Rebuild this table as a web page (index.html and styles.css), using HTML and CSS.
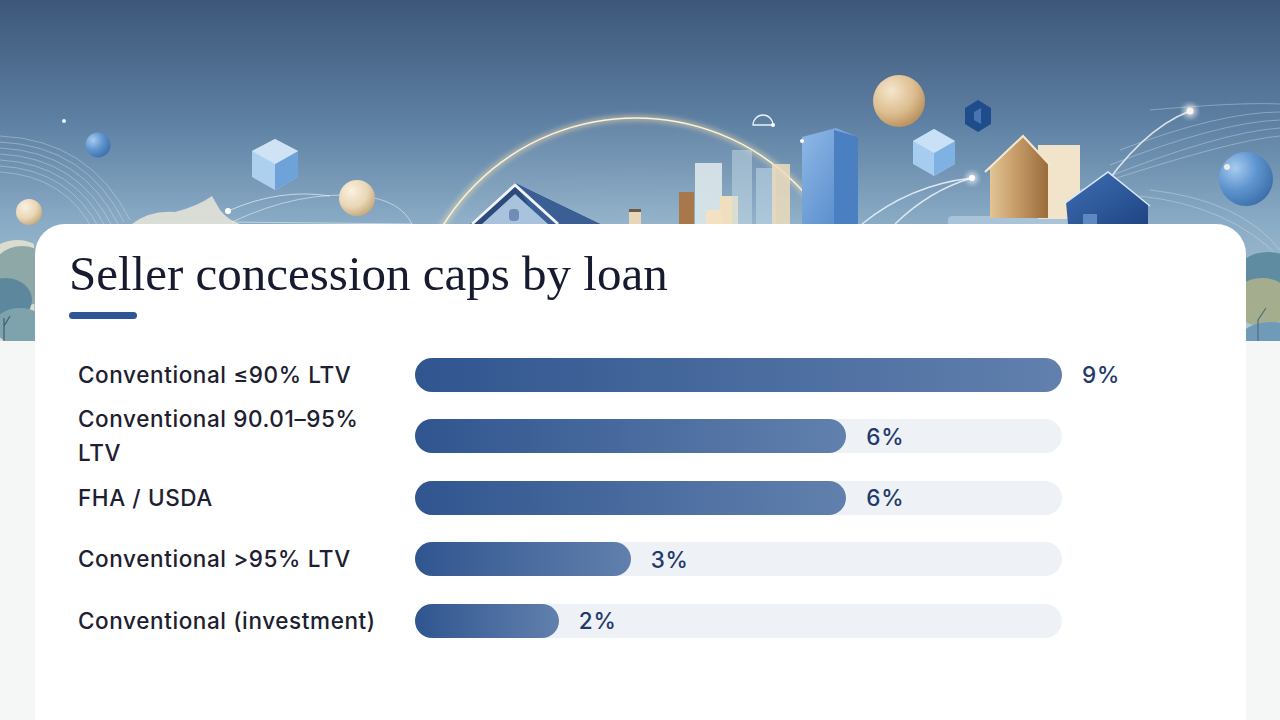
FILE: index.html
```html
<!DOCTYPE html>
<html lang="en">
<head>
<meta charset="utf-8">
<title>Seller concession caps by loan</title>
<link rel="stylesheet" href="styles.css">
</head>
<body>
<div class="page">
  <div class="banner">
    <svg class="banner-art" viewBox="0 0 1280 341" width="1280" height="341" xmlns="http://www.w3.org/2000/svg">
      <defs>
        <linearGradient id="sky" x1="0" y1="0" x2="0" y2="1">
          <stop offset="0" stop-color="#3d5779"/>
          <stop offset="0.35" stop-color="#5d7fa2"/>
          <stop offset="0.65" stop-color="#89abc5"/>
          <stop offset="1" stop-color="#b4cbd6"/>
        </linearGradient>
        <radialGradient id="dome" cx="0.5" cy="1" r="0.9">
          <stop offset="0" stop-color="#ffffff" stop-opacity="0.35"/>
          <stop offset="1" stop-color="#ffffff" stop-opacity="0.05"/>
        </radialGradient>
        <radialGradient id="tan" cx="0.35" cy="0.3" r="0.75">
          <stop offset="0" stop-color="#f6e6cc"/>
          <stop offset="0.6" stop-color="#dcbd8f"/>
          <stop offset="1" stop-color="#b78f5c"/>
        </radialGradient>
        <radialGradient id="cream" cx="0.35" cy="0.3" r="0.75">
          <stop offset="0" stop-color="#fbf1df"/>
          <stop offset="0.6" stop-color="#e8d6b6"/>
          <stop offset="1" stop-color="#c6a87a"/>
        </radialGradient>
        <radialGradient id="blueball" cx="0.3" cy="0.3" r="0.8">
          <stop offset="0" stop-color="#a7cbef"/>
          <stop offset="0.5" stop-color="#5f95cf"/>
          <stop offset="1" stop-color="#3a6ca8"/>
        </radialGradient>
        <linearGradient id="tower" x1="0" y1="0" x2="1" y2="1">
          <stop offset="0" stop-color="#8fb8e6"/>
          <stop offset="1" stop-color="#4f85c8"/>
        </linearGradient>
        <linearGradient id="brown" x1="0" y1="0" x2="1" y2="0">
          <stop offset="0" stop-color="#e6c99a"/>
          <stop offset="0.5" stop-color="#c49a66"/>
          <stop offset="1" stop-color="#9a6c3c"/>
        </linearGradient>
        <linearGradient id="navy" x1="0" y1="0" x2="1" y2="1">
          <stop offset="0" stop-color="#3f6fb5"/>
          <stop offset="1" stop-color="#1f4583"/>
        </linearGradient>
        <filter id="glow" x="-20%" y="-20%" width="140%" height="140%">
          <feGaussianBlur stdDeviation="2.5"/>
        </filter>
      </defs>
      <rect width="1280" height="341" fill="url(#sky)"/>

      <!-- left concentric arcs -->
      <g fill="none" stroke="#dfeaf2" stroke-opacity="0.45" stroke-width="0.8">
        <path d="M0 136 Q90 140 130 220"/>
        <path d="M0 142 Q86 146 124 222"/>
        <path d="M0 148 Q82 152 118 224"/>
        <path d="M0 154 Q78 158 112 226"/>
        <path d="M0 160 Q74 164 106 228"/>
        <path d="M0 166 Q70 170 100 230"/>
        <path d="M0 172 Q66 176 94 232"/>
      </g>
      <!-- right concentric arcs -->
      <g fill="none" stroke="#dfeaf2" stroke-opacity="0.45" stroke-width="0.8">
        <path d="M1150 110 Q1240 102 1280 104"/>
        <path d="M1120 150 Q1220 112 1280 112"/>
        <path d="M1110 165 Q1220 122 1280 120"/>
        <path d="M1100 180 Q1220 132 1280 128"/>
        <path d="M1080 190 Q1230 140 1280 136"/>
        <path d="M1150 190 Q1240 200 1280 250"/>
        <path d="M1140 196 Q1230 206 1280 258"/>
      </g>

      <!-- dome -->
      <circle cx="636" cy="345" r="227" fill="url(#dome)"/>
      <circle cx="636" cy="345" r="227" fill="none" stroke="#ffe4ad" stroke-width="6" stroke-opacity="0.45" filter="url(#glow)"/>
      <circle cx="636" cy="345" r="227" fill="none" stroke="#fff3d6" stroke-width="1.4"/>

      <!-- paper hills left -->
      <path d="M132 224 Q150 210 175 212 Q198 206 212 196 L220 210 Q228 220 240 224 Z" fill="#e8e6d8" opacity="0.85"/>
      <path d="M232 222 Q300 190 362 196 Q400 200 412 224 Z" fill="none" stroke="#e6f0f6" stroke-opacity="0.6"/>

      <!-- left small objects -->
      <circle cx="98" cy="145" r="12.5" fill="url(#blueball)"/>
      <circle cx="29" cy="212" r="13" fill="url(#cream)"/>
      <circle cx="357" cy="198" r="18" fill="url(#cream)"/>
      <circle cx="64" cy="121" r="2" fill="#eaf3fa"/>
      <circle cx="228" cy="211" r="3" fill="#ffffff"/>
      <path d="M228 211 Q280 188 330 196" fill="none" stroke="#e6f0f6" stroke-width="1" stroke-opacity="0.7"/>
      <!-- cube -->
      <polygon points="275,139 298,151 298,177 275,190 252,177 252,151" fill="#aed0ef"/>
      <polygon points="275,164 298,151 298,177 275,190" fill="#6ea3da"/>
      <polygon points="275,139 298,151 275,164 252,151" fill="#cfe3f5"/>

      <!-- house center -->
      <polygon points="470,224 515,183 600,224" fill="#2c4a7c"/>
      <polygon points="515,183 560,205 600,224 540,224" fill="#3b5f95"/>
      <polygon points="482,224 515,194 548,224" fill="#a9c2dd"/>
      <polyline points="472,224 515,185 558,224" fill="none" stroke="#f0f4f8" stroke-width="3"/>
      <rect x="509" y="209" width="10" height="12" rx="4" fill="#6f8db5"/>
      <rect x="629" y="209" width="12" height="15" fill="#e8d6b8"/>
      <rect x="629" y="209" width="12" height="3" fill="#6b5a45"/>

      <!-- city buildings -->
      <rect x="679" y="192" width="15" height="32" fill="#a9784a"/>
      <rect x="695" y="163" width="27" height="61" fill="#dce8ea" opacity="0.9"/>
      <rect x="720" y="196" width="18" height="28" fill="#f0dfbd"/>
      <rect x="706" y="210" width="16" height="14" fill="#f2e2c2"/>
      <rect x="732" y="150" width="20" height="74" fill="#c5dbe6" opacity="0.5"/>
      <rect x="756" y="168" width="20" height="56" fill="#bdd5e4" opacity="0.6"/>
      <rect x="772" y="164" width="18" height="60" fill="#ecdcbc" opacity="0.85"/>
      <polygon points="802,137 836,128 858,137 858,224 802,224" fill="url(#tower)"/>
      <polygon points="834,130 858,137 858,224 834,224" fill="#4a7fc2"/>
      <circle cx="802" cy="141" r="2" fill="#ffffff"/>

      <!-- right floating objects -->
      <path d="M753 125 A10 10 0 0 1 773 125 Z" fill="none" stroke="#e8f1f8" stroke-width="1.3"/>
      <circle cx="773" cy="125" r="2" fill="#ffffff"/>
      <ellipse cx="899" cy="101" rx="26" ry="26" fill="url(#tan)"/>
      <polygon points="978,100 991,108 991,124 978,132 965,124 965,108" fill="#1f4c8a"/>
      <polygon points="974,112 981,108 981,124 974,120" fill="#4a76b0"/>
      <polygon points="934,129 955,141 955,164 934,176 913,164 913,141" fill="#a6cdef"/>
      <polygon points="934,153 955,141 955,164 934,176" fill="#7fb2e2"/>
      <polygon points="934,129 955,141 934,153 913,141" fill="#c8e1f6"/>

      <!-- curves with glowing dots -->
      <g fill="none" stroke="#eef5fb" stroke-width="1.4" stroke-opacity="0.85">
        <path d="M862 224 Q910 185 972 178"/>
        <path d="M895 224 Q930 190 972 178"/>
        <path d="M1095 200 Q1140 130 1190 111"/>
      </g>
      <circle cx="972" cy="178" r="6" fill="#ffffff" opacity="0.6" filter="url(#glow)"/>
      <circle cx="972" cy="178" r="3" fill="#ffffff"/>
      <circle cx="1190" cy="111" r="7" fill="#ffffff" opacity="0.6" filter="url(#glow)"/>
      <circle cx="1190" cy="111" r="3.5" fill="#fff4ea"/>

      <!-- platform -->
      <rect x="948" y="216" width="130" height="10" rx="4" fill="#a9c3d8"/>

      <!-- brown house & beige block -->
      <rect x="1038" y="145" width="42" height="74" fill="#f1e4cb"/>
      <polygon points="987,170 1023,135 1048,162 1048,218 990,218 990,170" fill="url(#brown)"/>
      <polyline points="985,172 1023,136 1050,165" fill="none" stroke="#f6e8cf" stroke-width="2"/>

      <!-- blue house -->
      <polygon points="1066,202 1108,173 1148,204 1148,224 1068,224" fill="url(#navy)"/>
      <polyline points="1064,204 1108,172 1150,206" fill="none" stroke="#dce8f4" stroke-width="1.5"/>
      <rect x="1083" y="214" width="14" height="10" fill="#5d88c2"/>

      <!-- right sphere -->
      <circle cx="1246" cy="179" r="27" fill="url(#blueball)"/>
      <circle cx="1227" cy="167" r="3" fill="#fff6e6" opacity="0.85"/>

      <!-- left trees -->
      <path d="M0 244 Q18 236 34 244 L34 341 L0 341 Z" fill="#d9dccf"/>
      <ellipse cx="22" cy="276" rx="32" ry="30" fill="#8ea8a8"/>
      <ellipse cx="6" cy="300" rx="26" ry="22" fill="#5d879c"/>
      <ellipse cx="20" cy="326" rx="26" ry="18" fill="#7fa3ad"/>
      <path d="M4 341 L4 318 M4 326 L10 316" stroke="#3f5d72" stroke-width="1.2" fill="none"/>

      <!-- right trees -->
      <ellipse cx="1268" cy="272" rx="30" ry="20" fill="#5f8ca0"/>
      <ellipse cx="1262" cy="302" rx="30" ry="24" fill="#a4ad8e"/>
      <ellipse cx="1272" cy="336" rx="30" ry="14" fill="#6f9bb8"/>
      <path d="M1258 341 L1258 320 L1266 308" stroke="#4f6f7c" stroke-width="1.2" fill="none"/>
    </svg>
  </div>

  <main class="card">
    <h1 class="title">Seller concession caps by loan</h1>
    <div class="accent"></div>

    <div class="chart">
      <div class="row">
        <div class="label">Conventional ≤90% LTV</div>
        <div class="track"><div class="fill" style="width: 100%"></div><span class="value">9%</span></div>
      </div>
      <div class="row">
        <div class="label">Conventional 90.01–95% LTV</div>
        <div class="track"><div class="fill" style="width: 66.667%"></div><span class="value">6%</span></div>
      </div>
      <div class="row">
        <div class="label">FHA / USDA</div>
        <div class="track"><div class="fill" style="width: 66.667%"></div><span class="value">6%</span></div>
      </div>
      <div class="row">
        <div class="label">Conventional &gt;95% LTV</div>
        <div class="track"><div class="fill" style="width: 33.333%"></div><span class="value">3%</span></div>
      </div>
      <div class="row">
        <div class="label">Conventional (investment)</div>
        <div class="track"><div class="fill" style="width: 22.222%"></div><span class="value">2%</span></div>
      </div>
    </div>
  </main>
</div>
</body>
</html>
```

FILE: styles.css
```css
* { box-sizing: border-box; }

html, body {
  margin: 0;
  padding: 0;
  background: #f5f6f6;
  width: 1280px;
  height: 720px;
  overflow: hidden;
}

.page {
  width: 1280px;
  height: 720px;
  overflow: hidden;
}

.banner {
  height: 341px;
  width: 1280px;
}

.banner-art {
  display: block;
}

.card {
  position: relative;
  z-index: 1;
  margin: -117px 0 0 35px;
  width: 1211px;
  height: 560px;
  background: #ffffff;
  border-radius: 30px 30px 0 0;
  padding: 22px 0 0 34px;
}

.title {
  margin: 0;
  font-family: "Liberation Serif", "Times New Roman", serif;
  font-weight: 400;
  font-size: 49px;
  line-height: 56px;
  color: #161b30;
}

.accent {
  width: 68px;
  height: 7px;
  border-radius: 4px;
  background: #2f5597;
  margin-top: 10px;
}

.chart {
  margin-top: 25px;
  padding-left: 9px;
  display: flex;
  flex-direction: column;
}

.row {
  height: 61.5px;
  display: flex;
  align-items: center;
}

.label {
  width: 337px;
  padding-right: 26px;
  font-family: "Inter", "Liberation Sans", sans-serif;
  font-weight: 500;
  font-size: 22.5px;
  letter-spacing: 0.6px;
  line-height: 34px;
  color: #1c2030;
}

.track {
  width: 647px;
  height: 34px;
  border-radius: 17px;
  background: #eef1f6;
  display: flex;
  align-items: center;
  flex-shrink: 0;
}

.fill {
  height: 34px;
  border-radius: 17px;
  background: linear-gradient(90deg, #30558f 0%, #6180ad 100%);
  flex-shrink: 0;
}

.value {
  margin-left: 20px;
  flex-shrink: 0;
  white-space: nowrap;
  font-family: "Inter", "Liberation Sans", sans-serif;
  font-weight: 500;
  font-size: 22.5px;
  letter-spacing: 0.8px;
  color: #1f3a6b;
}
```
